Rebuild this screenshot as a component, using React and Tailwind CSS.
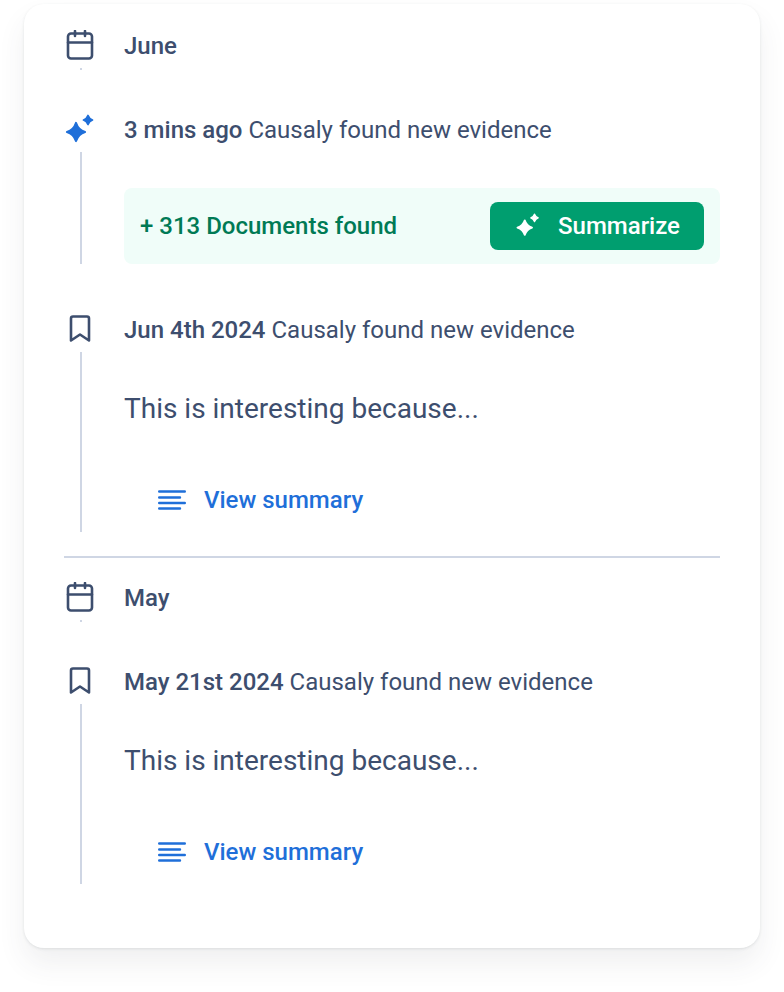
const Calendar = () => (
  <svg width="32" height="32" viewBox="0 0 32 32" fill="none" stroke="#3d4e6e" strokeWidth="2.6" strokeLinecap="round" strokeLinejoin="round">
    <rect x="4" y="3.5" width="24" height="25" rx="3" />
    <path d="M4 12.5h24M11 1v5M21 1v5" />
  </svg>
);
const Bookmark = () => (
  <svg width="32" height="32" viewBox="0 0 32 32" fill="none" stroke="#3d4e6e" strokeWidth="2.6" strokeLinejoin="round" strokeLinecap="round">
    <path d="M9 2.5h14a2 2 0 0 1 2 2V26.5L16 20.5 7 26.5V4.5a2 2 0 0 1 2-2z" />
  </svg>
);
const Sparkle = ({ color, size = 32 }) => (
  <svg width={size} height={size} viewBox="0 0 32 32" fill={color} className="shrink-0">
    <path d="M12 9 Q14.2 15.8 21 18 Q14.2 20.2 12 27 Q9.8 20.2 3 18 Q9.8 15.8 12 9z" stroke={color} strokeWidth="2.2" strokeLinejoin="round" />
    <path d="M24 1.5 Q25.2 4.8 28.5 6 Q25.2 7.2 24 10.5 Q22.8 7.2 19.5 6 Q22.8 4.8 24 1.5z" stroke={color} strokeWidth="1.8" strokeLinejoin="round" />
  </svg>
);
const Lines = () => (
  <svg width="28" height="20" viewBox="0 0 28 20" fill="none" stroke="#1f6fd9" strokeWidth="2.4" strokeLinecap="round" className="shrink-0">
    <path d="M1.2 1.5h25.6M1.2 7.5h20.8M1.2 13h25.6M1.2 18.5h20.8" />
  </svg>
);

function MonthHeader({ label }) {
  return (
    <div className="flex gap-[28px]">
      <div className="w-[32px] flex flex-col">
        <Calendar />
        <div className="mt-[6px] ml-[16px] h-[2px] w-[2px] bg-[#cfd6e4]" />
      </div>
      <div className="h-[32px] flex items-center text-[24px] font-medium text-[#3d4e6e]">{label}</div>
    </div>
  );
}

function Item({ icon, date, className, children }) {
  return (
    <div className={`flex gap-[28px] ${className}`}>
      <div className="w-[32px] shrink-0 flex flex-col">
        {icon}
        <div className="mt-[6px] ml-[16px] w-[2px] flex-1 bg-[#cfd6e4]" />
      </div>
      <div className="flex-1">
        <div className="h-[32px] flex items-center text-[24px] text-[#3d4e6e] whitespace-pre">
          <span className="font-medium">{date}</span> Causaly found new evidence
        </div>
        {children}
      </div>
    </div>
  );
}

function Note() {
  return (
    <div className="pb-[16px]">
      <div className="mt-[47px] h-[32px] flex items-center text-[28px] text-[#3d4e6e]">This is interesting because...</div>
      <div className="mt-[59px] ml-[34px] h-[32px] flex items-center gap-[18px] text-[24px] font-medium text-[#1f6fd9]">
        <Lines />
        <span>View summary</span>
      </div>
    </div>
  );
}

export default function App() {
  return (
    <div className="w-[784px] h-[992px] bg-white pt-[4px] pl-[24px] font-['Roboto',sans-serif]">
      <div className="w-[736px] h-[944px] rounded-[20px] bg-white pt-[26px] px-[40px] shadow-[0_1px_3px_rgba(60,70,70,0.12),0_16px_28px_rgba(60,70,80,0.08)]">
        <MonthHeader label="June" />
        <Item className="mt-[44px]" icon={<Sparkle color="#1f6fd9" />} date="3 mins ago">
          <div className="mt-[42px] h-[76px] rounded-[8px] bg-[#f0fdf9] pl-[16px] pr-[16px] flex items-center justify-between">
            <span className="text-[24px] font-medium text-[#007a55]">+ 313 Documents found</span>
            <button className="w-[214px] h-[48px] rounded-[8px] bg-[#009e6f] flex items-center pl-[25px] gap-[17px] text-[24px] font-medium text-white">
              <Sparkle color="#ffffff" size={26} />
              <span>Summarize</span>
            </button>
          </div>
        </Item>
        <Item className="mt-[50px]" icon={<Bookmark />} date="Jun 4th 2024">
          <Note />
        </Item>
        <div className="mt-[24px] h-[2px] bg-[#cfd6e4]" />
        <div className="mt-[24px]">
          <MonthHeader label="May" />
        </div>
        <Item className="mt-[44px]" icon={<Bookmark />} date="May 21st 2024">
          <Note />
        </Item>
      </div>
    </div>
  );
}
